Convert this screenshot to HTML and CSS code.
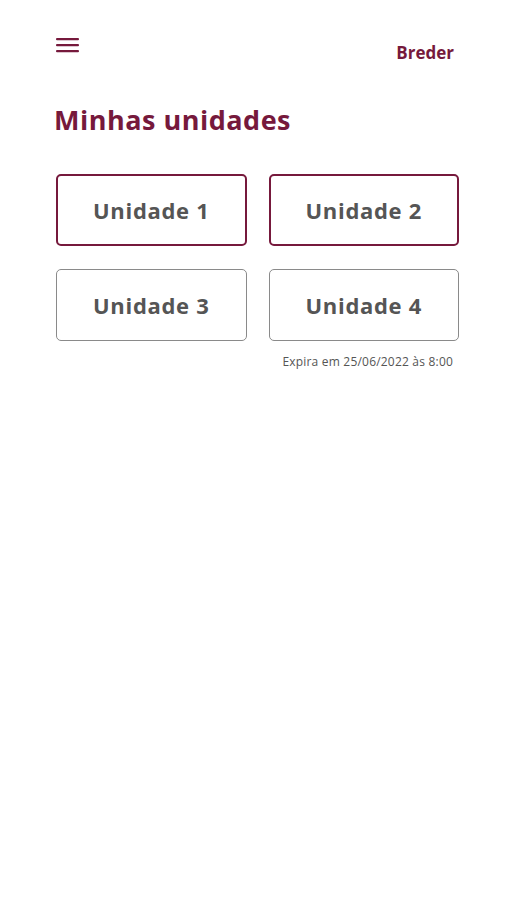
FILE: index.html
```html
<!DOCTYPE html>
<html lang="pt-BR">
<head>
  <meta charset="UTF-8" />
  <meta name="viewport" content="width=device-width, initial-scale=1.0" />
  <title>Minhas unidades</title>
  <link rel="stylesheet" href="styles.css">
</head>
<body>

  <header class="topbar">
    <button class="menu-btn" aria-label="Menu">
      <svg width="23" height="16" viewBox="0 0 23 16">
        <rect x="0" y="0" width="23" height="2.2" rx="1" />
        <rect x="0" y="6" width="23" height="2.2" rx="1" />
        <rect x="0" y="12" width="23" height="2.2" rx="1" />
      </svg>
    </button>
    <span class="brand">Breder</span>
  </header>

  <main class="content">
    <h1 class="title">Minhas unidades</h1>

    <div class="units">
      <button class="unit unit-active">Unidade 1</button>
      <button class="unit unit-active">Unidade 2</button>
      <button class="unit">Unidade 3</button>
      <button class="unit">Unidade 4</button>
    </div>

    <p class="expires">Expira em 25/06/2022 às 8:00</p>
  </main>

</body>
</html>
```

FILE: styles.css
```css
body {
  margin: 0;
  background: #fff;
  font-family: 'Open Sans', Roboto, 'Liberation Sans', Arial, sans-serif;
  color: #555;
}

.topbar {
  display: flex;
  justify-content: space-between;
  align-items: flex-start;
  padding: 38px 53px 0 56px;
}

.menu-btn {
  border: none;
  background: none;
  padding: 0;
  margin: 0;
  line-height: 0;
  cursor: pointer;
}

.menu-btn svg {
  fill: #76193c;
}

.brand {
  margin-top: 3px;
  font-size: 17px;
  font-weight: 700;
  color: #76193c;
}

.content {
  padding: 0 48px 0 56px;
}

.title {
  margin: 37px 0 0 -2px;
  font-size: 27px;
  font-weight: 700;
  color: #76193c;
  letter-spacing: 0.5px;
}

.units {
  display: grid;
  grid-template-columns: 1fr 1fr;
  gap: 23px 22px;
  margin-top: 36px;
}

.unit {
  height: 72px;
  border: 1.5px solid #8a8a8a;
  border-radius: 5px;
  background: #fff;
  font-family: inherit;
  font-size: 22px;
  font-weight: 700;
  color: #555;
  letter-spacing: 0.7px;
  cursor: pointer;
}

.unit-active {
  border: 2px solid #76193c;
}

.expires {
  margin: 12px 6px 0 0;
  text-align: right;
  font-size: 12px;
  color: #555;
  letter-spacing: 0.2px;
}
```
